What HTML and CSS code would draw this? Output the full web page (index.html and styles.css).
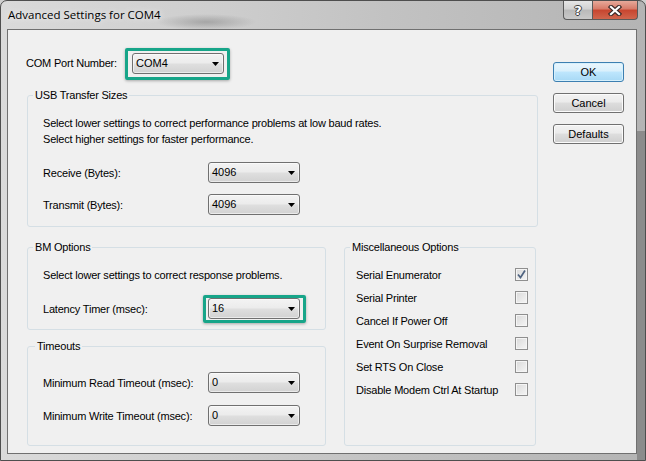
FILE: index.html
```html
<!DOCTYPE html>
<html lang="en">
<head>
    <meta charset="UTF-8">
    <title>Advanced Settings for COM4</title>
    <link rel="stylesheet" href="styles.css">
</head>
<body>
    <div class="window">
        <div class="titlebar">
            <span class="window-title">Advanced Settings for COM4</span>
            <div class="caption-buttons">
                <span class="caption-btn help-btn">?</span>
                <span class="caption-btn close-btn">
                    <svg width="14" height="11" viewBox="0 0 14 11">
                        <path d="M3 2 L11 9 M11 2 L3 9" stroke="#3b2a28" stroke-width="4.4" stroke-linecap="square"/>
                        <path d="M3 2 L11 9 M11 2 L3 9" stroke="#ffffff" stroke-width="2.2" stroke-linecap="square"/>
                    </svg>
                </span>
            </div>
        </div>

        <div class="client">
            <div class="main-col">
                <div class="port-row">
                    <span class="port-label">COM Port Number:</span>
                    <div class="highlight">
                        <div class="combo">COM4</div>
                    </div>
                </div>

                <fieldset class="group usb-group">
                    <legend>USB Transfer Sizes</legend>
                    <p class="note">Select lower settings to correct performance problems at low baud rates.</p>
                    <p class="note">Select higher settings for faster performance.</p>
                    <div class="field-rows usb-rows">
                        <span>Receive (Bytes):</span>
                        <div class="combo">4096</div>
                        <span>Transmit (Bytes):</span>
                        <div class="combo">4096</div>
                    </div>
                </fieldset>

                <div class="lower">
                    <div class="lower-left">
                        <fieldset class="group bm-group">
                            <legend>BM Options</legend>
                            <p class="note">Select lower settings to correct response problems.</p>
                            <div class="field-rows bm-rows">
                                <span>Latency Timer (msec):</span>
                                <div class="highlight highlight-inline">
                                    <div class="combo">16</div>
                                </div>
                            </div>
                        </fieldset>

                        <fieldset class="group timeout-group">
                            <legend>Timeouts</legend>
                            <div class="field-rows timeout-rows">
                                <span>Minimum Read Timeout (msec):</span>
                                <div class="combo">0</div>
                                <span>Minimum Write Timeout (msec):</span>
                                <div class="combo">0</div>
                            </div>
                        </fieldset>
                    </div>

                    <fieldset class="group misc-group">
                        <legend>Miscellaneous Options</legend>
                        <div class="check-rows">
                            <span>Serial Enumerator</span>
                            <span class="check checked">
                                <svg width="11" height="11" viewBox="0 0 11 11">
                                    <path d="M2 5.5 L4.5 8.5 L9 1.5" fill="none" stroke="#4f6380" stroke-width="1.7"/>
                                </svg>
                            </span>
                            <span>Serial Printer</span>
                            <span class="check"></span>
                            <span>Cancel If Power Off</span>
                            <span class="check"></span>
                            <span>Event On Surprise Removal</span>
                            <span class="check"></span>
                            <span>Set RTS On Close</span>
                            <span class="check"></span>
                            <span>Disable Modem Ctrl At Startup</span>
                            <span class="check"></span>
                        </div>
                    </fieldset>
                </div>
            </div>

            <div class="button-col">
                <button class="btn btn-default">OK</button>
                <button class="btn">Cancel</button>
                <button class="btn">Defaults</button>
            </div>
        </div>
    </div>
</body>
</html>
```

FILE: styles.css
```css
* {
    margin: 0;
    padding: 0;
    box-sizing: border-box;
}

body {
    background: #cfcfcf;
    font-family: 'Liberation Sans', Arial, sans-serif;
    font-size: 11px;
    letter-spacing: -0.2px;
    color: #000;
}

/* window frame (glass) */
.window {
    width: 646px;
    height: 461px;
    border: 1px solid #4e4e4e;
    border-radius: 7px 7px 0 0;
    padding: 0 8px 6px 6px;
    display: flex;
    flex-direction: column;
    background:
        linear-gradient(to bottom, transparent 130px, #8c8c8c 130px) right top / 8px 100% no-repeat,
        radial-gradient(ellipse 50px 8px at 205px 21px, rgba(90, 90, 90, 0.35), transparent),
        linear-gradient(to right, #dadada 0%, #cdcdcd 35%, #c2c2c2 60%, #b4b4b4 100%);
}

.titlebar {
    height: 28px;
    display: flex;
    justify-content: space-between;
    align-items: flex-start;
}

.window-title {
    font-family: 'Open Sans', 'Noto Sans', sans-serif;
    font-size: 11.5px;
    letter-spacing: 0;
    line-height: 16px;
    margin-top: 6px;
    padding-left: 1px;
    text-shadow: 0 0 6px rgba(255, 255, 255, 0.9);
}

.caption-buttons {
    display: flex;
    margin-right: -1px;
}

.caption-btn {
    height: 19px;
    display: flex;
    align-items: center;
    justify-content: center;
    border: 1px solid #5a5a5a;
    border-top: none;
}

.help-btn {
    width: 29px;
    border-right: none;
    border-radius: 0 0 0 4px;
    background: linear-gradient(#e6e6e6 0%, #d2d2d2 45%, #b9b9b9 50%, #c9c9c9 100%);
    color: #fff;
    font-family: 'DejaVu Sans', sans-serif;
    font-weight: bold;
    font-size: 13px;
    text-shadow: 1px 0 #3d3d3d, -1px 0 #3d3d3d, 0 1px #3d3d3d, 0 -1px #3d3d3d;
}

.close-btn {
    width: 46px;
    border-radius: 0 0 4px 0;
    background: linear-gradient(#e7a99a 0%, #d77a68 45%, #c7452f 50%, #d0654d 100%);
}

/* dialog body */
.client {
    flex: 1;
    background: #f0f0f0;
    border: 1px solid #707070;
    padding-left: 19px;
    display: grid;
    grid-template-columns: 511px 71px;
    column-gap: 15px;
    align-content: start;
}

.main-col {
    display: flex;
    flex-direction: column;
}

.port-row {
    display: flex;
    align-items: center;
    padding-top: 18px;
}

.port-label {
    width: 99px;
    margin-left: -1px;
    padding-bottom: 3px;
}

.highlight {
    display: inline-flex;
    border: 3px solid #17a589;
    border-radius: 2px;
    padding: 2px 3px 3px 4px;
    box-shadow: 0 1px 3px rgba(0, 0, 0, 0.3);
}

.highlight-inline {
    padding: 0 3px 1px 2px;
    margin: -3px 0 -4px -5px;
    justify-self: start;
}

.combo {
    position: relative;
    width: 92px;
    height: 21px;
    border: 1px solid #707070;
    border-radius: 3px;
    padding-left: 3px;
    line-height: 19px;
    letter-spacing: 0;
    background: linear-gradient(#f3f3f3 0%, #ececec 45%, #dedede 55%, #d2d2d2 100%);
    box-shadow: inset 0 0 0 1px rgba(255, 255, 255, 0.55);
}

.combo::after {
    content: '';
    position: absolute;
    right: 4px;
    top: 8px;
    width: 7px;
    height: 4px;
    background: #000;
    clip-path: polygon(0 0, 100% 0, 50% 100%);
}

/* group boxes */
.group {
    border: 1px solid #d5dfe5;
    border-radius: 3px;
    padding: 13px 15px 11px 15px;
    min-width: 0;
}

.group legend {
    line-height: 14px;
    padding: 0 2px;
    margin-left: -10px;
}

.usb-group {
    margin-top: 8px;
    width: 511px;
}

.note {
    line-height: 16px;
}

.field-rows {
    display: grid;
    grid-template-columns: 165px 92px;
    align-items: center;
}

.usb-rows {
    margin-top: 15px;
    row-gap: 11px;
}

.bm-rows {
    margin-top: 15px;
}

.lower {
    margin-top: 13px;
    display: grid;
    grid-template-columns: 299px 192px;
    column-gap: 18px;
}

.lower-left {
    display: flex;
    flex-direction: column;
    gap: 9px;
}

.bm-group {
    padding-bottom: 10px;
}

.timeout-group {
    padding-top: 19px;
    padding-bottom: 19px;
}

.timeout-group legend {
    margin-left: -8px;
}

.timeout-rows {
    row-gap: 12px;
}

.misc-group {
    padding: 9px 7px 0 11px;
}

.misc-group legend {
    margin-left: -6px;
}

.check-rows {
    display: grid;
    grid-template-columns: 1fr 13px;
    grid-auto-rows: 23px;
    align-items: center;
}

.check {
    width: 13px;
    height: 13px;
    border: 1px solid #8f8f8f;
    background: linear-gradient(135deg, #d9d9d9, #f6f6f6);
    box-shadow: inset 0 0 0 1px #f5f5f5;
    display: flex;
    align-items: center;
    justify-content: center;
}

/* command buttons */
.button-col {
    display: flex;
    flex-direction: column;
    gap: 11px;
    padding-top: 32px;
}

.btn {
    height: 20px;
    border: 1px solid #707070;
    border-radius: 3px;
    font-family: inherit;
    font-size: 11px;
    letter-spacing: 0;
    color: #000;
    background: linear-gradient(#f2f2f2 0%, #ebebeb 45%, #dddddd 50%, #cfcfcf 100%);
    box-shadow: inset 0 0 0 1px #fbfbfb;
}

.btn-default {
    border-color: #3c7fb1;
    background: linear-gradient(#eaf6fd 0%, #d9f0fc 45%, #bee6fd 50%, #a7d9f5 100%);
    box-shadow: inset 0 0 0 1px #d6f0fc;
}
```
